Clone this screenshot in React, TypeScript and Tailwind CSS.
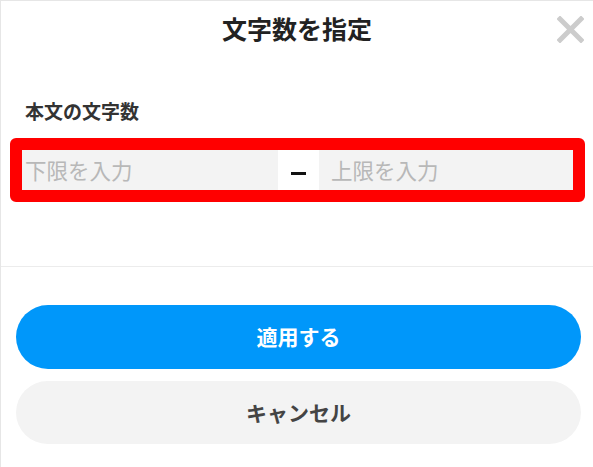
const font = '[font-family:"Noto_Sans_CJK_JP","Noto_Sans",sans-serif]'

function CloseIcon() {
    return (
        <svg width="27" height="27" viewBox="0 0 27 27" aria-hidden="true">
            <path d="M3 3 L24 24 M24 3 L3 24" stroke="#cccccc" strokeWidth="5" strokeLinecap="square" fill="none" />
        </svg>
    )
}

export default function App() {
    return (
        <div className={`h-[467px] w-[593px] overflow-hidden border-l border-t border-[#e6e6e6] bg-white ${font}`}>
            <div className="grid h-[56px] grid-cols-[1fr_auto_1fr] items-center">
                <div />
                <h1 className="text-[25px] font-bold text-[#222222]">文字数を指定</h1>
                <button type="button" className="mr-[9px] justify-self-end" aria-label="閉じる">
                    <CloseIcon />
                </button>
            </div>

            <p className="ml-[24px] mt-[42px] text-[19px] leading-[24px] font-bold text-[#333333]">本文の文字数</p>

            <div className="ml-[9px] mt-[15px] w-[575px] rounded-[6px] border-[12px] border-[#ff0000]">
                <div className="flex h-[40px] items-stretch">
                    <input
                        placeholder="下限を入力"
                        className={`w-[256px] bg-[#f3f3f3] pl-[3px] text-[21.5px] text-[#333333] outline-none placeholder:text-[#b8b8b8] ${font}`}
                    />
                    <div className="flex w-[41px] items-center justify-center">
                        <div className="mt-[6px] h-[3px] w-[15px] bg-[#111111]" />
                    </div>
                    <input
                        placeholder="上限を入力"
                        className={`min-w-0 flex-1 bg-[#f3f3f3] pl-[12px] text-[21.5px] text-[#333333] outline-none placeholder:text-[#b8b8b8] ${font}`}
                    />
                </div>
            </div>

            <div className="mt-[64px] border-b border-[#ececec]" />

            <div className="ml-[15px] mr-[12px] mt-[38px] flex flex-col gap-[12px]">
                <button
                    type="button"
                    className="flex h-[64px] items-center justify-center rounded-full bg-[#0097fa] text-[21px] font-bold text-white"
                >
                    適用する
                </button>
                <button
                    type="button"
                    className="flex h-[63px] items-center justify-center rounded-full bg-[#f3f3f3] text-[21px] font-bold text-[#444444]"
                >
                    キャンセル
                </button>
            </div>
        </div>
    )
}
